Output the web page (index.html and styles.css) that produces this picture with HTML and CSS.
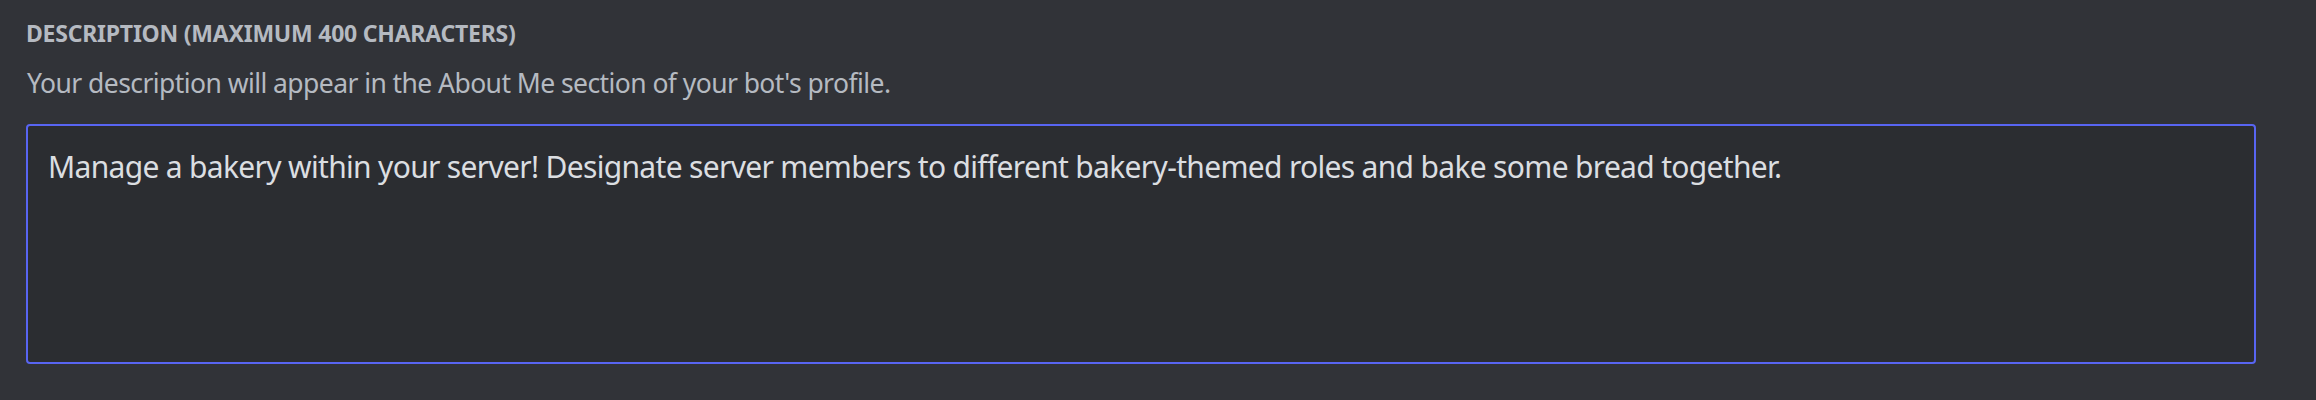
FILE: index.html
```html
<!DOCTYPE html>
<html lang="en">
<head>
<meta charset="utf-8">
<title>Description</title>
<link rel="stylesheet" href="styles.css">
</head>
<body>
<section class="field">
  <h5 class="field-label">Description (Maximum 400 Characters)</h5>
  <p class="field-help">Your description will appear in the About Me section of your bot's profile.</p>
  <div class="field-input">Manage a bakery within your server! Designate server members to different bakery-themed roles and bake some bread together.</div>
</section>
</body>
</html>
```
FILE: styles.css
```css
html, body {
  margin: 0;
  padding: 0;
  background: #313338;
  height: 100%;
}
body {
  font-family: "Noto Sans", "Open Sans", sans-serif;
}
.field {
  display: flex;
  flex-direction: column;
  padding: 17px 60px 0 26px;
}
.field-label {
  margin: 0;
  font-size: 23px;
  line-height: 32px;
  font-weight: 700;
  text-transform: uppercase;
  color: #b5bac1;
  letter-spacing: -0.23px;
}
.field-help {
  margin: 16px 0 0 1px;
  font-size: 26.5px;
  line-height: 36px;
  color: #b5bac1;
  letter-spacing: -0.57px;
}
.field-input {
  margin-top: 23px;
  box-sizing: border-box;
  height: 240px;
  border: 2px solid #5865f2;
  border-radius: 4px;
  background: #2b2d31;
  padding: 21px 20px 19px;
  font-size: 30px;
  line-height: 40px;
  color: #dbdee1;
  letter-spacing: -0.68px;
}
```
